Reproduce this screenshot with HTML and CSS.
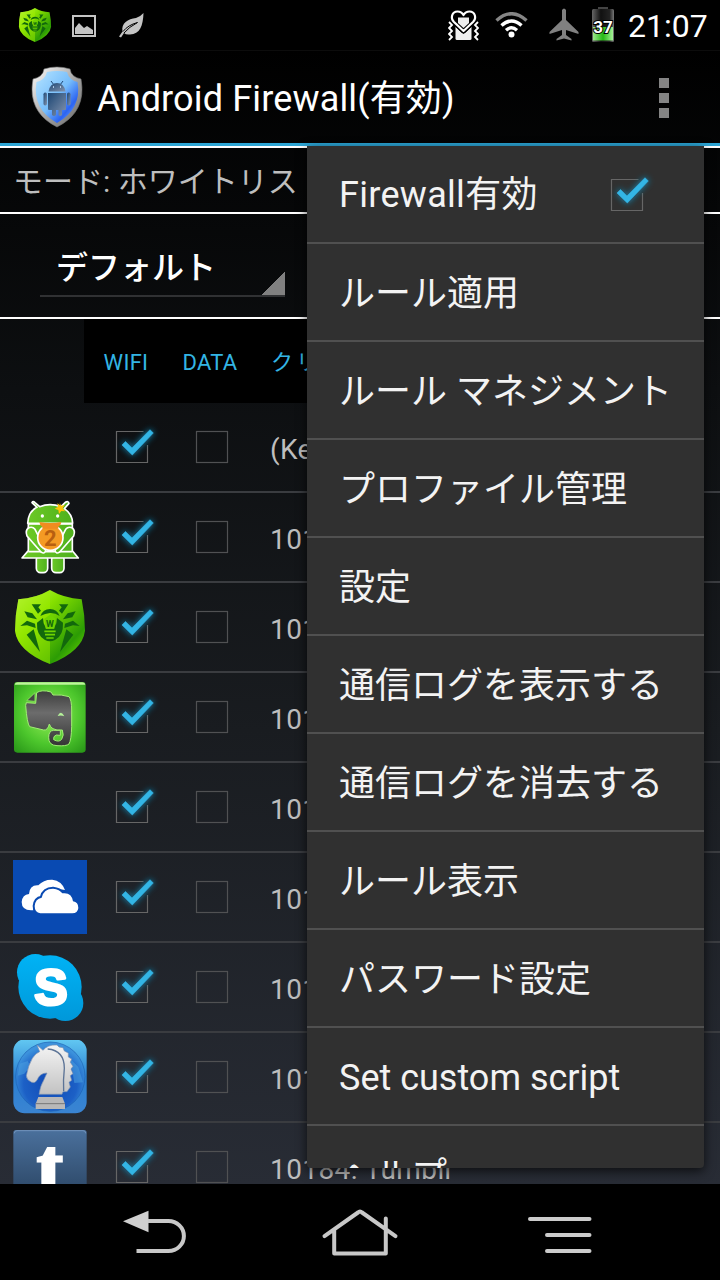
FILE: index.html
```
<!DOCTYPE html>
<html lang="ja">
<head>
  <meta charset="UTF-8">
  <meta name="viewport" content="width=device-width, initial-scale=1.0">
  <title>Android Firewall</title>
  <link rel="stylesheet" href="styles.css">
</head>
<body>
  <svg class="defs" width="0" height="0">
    <defs>
      <linearGradient id="shieldGreen" x1="0" y1="0" x2="1" y2="1">
        <stop offset="0" stop-color="#c4f85c"/><stop offset=".35" stop-color="#86e000"/>
        <stop offset=".75" stop-color="#2c9c04"/><stop offset="1" stop-color="#7ce800"/>
      </linearGradient>
      <linearGradient id="silver" x1="0" y1="0" x2="1" y2="1">
        <stop offset="0" stop-color="#fff"/><stop offset=".5" stop-color="#aaa"/><stop offset="1" stop-color="#666"/>
      </linearGradient>
      <linearGradient id="blueShield" x1="0" y1="0" x2="1" y2="1">
        <stop offset="0" stop-color="#b5e4ff"/><stop offset=".5" stop-color="#76bdfb"/><stop offset=".75" stop-color="#2c64f2"/><stop offset="1" stop-color="#8cc8ff"/>
      </linearGradient>
      <linearGradient id="steel" x1="0" y1="0" x2="1" y2="1">
        <stop offset="0" stop-color="#1c4674"/><stop offset="1" stop-color="#8494ae"/>
      </linearGradient>
      <linearGradient id="battery" x1="0" y1="0" x2="1" y2="0">
        <stop offset="0" stop-color="#666"/><stop offset=".4" stop-color="#111"/><stop offset=".8" stop-color="#222"/><stop offset="1" stop-color="#777"/>
      </linearGradient>
      <linearGradient id="charge" x1="0" y1="0" x2="1" y2="0">
        <stop offset="0" stop-color="#9be68b"/><stop offset=".5" stop-color="#26b814"/><stop offset="1" stop-color="#a6f298"/>
      </linearGradient>
      <radialGradient id="everGreen" cx=".5" cy=".45" r=".72">
        <stop offset="0" stop-color="#9cf25c"/><stop offset=".6" stop-color="#4cc62c"/><stop offset="1" stop-color="#299718"/>
      </radialGradient>
      <linearGradient id="elephant" x1="0" y1="0" x2="0" y2="1">
        <stop offset="0" stop-color="#3c3c3c"/><stop offset=".4" stop-color="#6c6c6c"/><stop offset="1" stop-color="#343434"/>
      </linearGradient>
      <linearGradient id="doll" x1="0" y1="0" x2="1" y2="0">
        <stop offset="0" stop-color="#6cc926"/><stop offset="1" stop-color="#4eb01c"/>
      </linearGradient>
      <linearGradient id="skype" gradientUnits="userSpaceOnUse" x1="0" y1="12" x2="0" y2="212">
        <stop offset="0" stop-color="#00b3f5"/><stop offset="1" stop-color="#0098da"/>
      </linearGradient>
      <linearGradient id="sky" x1="0" y1="0" x2="0" y2="1">
        <stop offset="0" stop-color="#62c8f2"/><stop offset=".5" stop-color="#2b80d2"/><stop offset="1" stop-color="#3a84d2"/>
      </linearGradient>
      <radialGradient id="globe" cx=".5" cy=".6" r=".55">
        <stop offset="0" stop-color="#0f48b4"/><stop offset=".7" stop-color="#1c60c6"/><stop offset="1" stop-color="#3c92dc"/>
      </radialGradient>
      <linearGradient id="knight" x1="0" y1="0" x2="0" y2="1">
        <stop offset="0" stop-color="#f4f4f4"/><stop offset="1" stop-color="#c2c2c2"/>
      </linearGradient>
      <linearGradient id="tumblr" x1="0" y1="0" x2="0" y2="1">
        <stop offset="0" stop-color="#4a709c"/><stop offset="1" stop-color="#28415e"/>
      </linearGradient>
      <filter id="glow" x="-50%" y="-50%" width="200%" height="200%">
        <feGaussianBlur stdDeviation="3.2"/>
      </filter>

      <symbol id="box" viewBox="-8 -12 60 56">
        <rect x=".5" y=".5" width="31" height="31" fill="none" stroke="#505153" stroke-width="1.2"/>
      </symbol>
      <symbol id="box-on" viewBox="-8 -12 60 56">
        <path d="M27.500.5H.5v31h31V14" fill="none" stroke="#666" stroke-width="1.2"/>
        <path d="M5 14l4.500-4.500 6.500 7L34-2.300 38.300 2 16.300 25z" fill="#1590c0" opacity=".8" filter="url(#glow)"/>
        <path d="M6 14l3.500-3.500 6.500 6.500L34-1.300 37.300 2 16.300 24z" fill="#33b5e5" stroke="#33b5e5" stroke-width=".6"/>
      </symbol>

      <symbol id="spider-shield" viewBox="0 0 222 222">
        <path d="M111 0Q70 24 16 28Q6 76 6 122Q14 184 111 222Q208 184 216 122Q216 76 206 28Q152 24 111 0z" fill="url(#shieldGreen)"/>
        <path d="M111 0Q70 24 16 28Q6 76 6 122Q14 184 111 222z" fill="#a4f000" opacity=".45"/>
        <g id="legs" fill="#12680c">
          <path d="M56 43H84L76 52 84 62 75 71z"/>
          <path d="M34 64L58 70 72 88 44 82z"/>
          <path d="M22 108L42 92 66 101 68 114 42 106z"/>
          <path d="M41 134L62 118 81 186z"/>
        </g>
        <use href="#legs" transform="matrix(-1 0 0 1 222 0)"/>
        <path d="M82 78Q90 57 111 57T140 78Q126 68 111 69T82 78z" fill="#12680c"/>
        <path d="M72 98L90 84 92 100 100 116H122L130 100 132 84 150 98Q152 136 126 150Q111 158 96 150Q70 136 72 98z" fill="#12680c"/>
        <path d="M111 74L128 86 124 116H98L94 86z" fill="#6fd400"/>
        <path d="M94 124H128M96 134H126M100 144H122" stroke="#6fd400" stroke-width="5"/>
        <text x="111" y="112" class="glyph-w">W</text>
      </symbol>
    </defs>
  </svg>

  <div class="statusbar">
    <svg class="st-shield" width="34" height="34"><use href="#spider-shield"/></svg>
    <svg class="st-picture" width="24" height="22" viewBox="0 0 24 22">
      <rect x="1" y="1" width="22" height="20" fill="none" stroke="#c4c4c4" stroke-width="2"/>
      <path d="M3 19V13L7 8l5 5 3-2 6 4v4z" fill="#c4c4c4"/>
    </svg>
    <svg class="st-leaf" width="25" height="25" viewBox="0 0 25 25">
      <path d="M24.500 0C24 13 21 21 11 21.500Q7 22 5 20L2 24.500 0 23.500 3.500 18.500C2 10 9 6 17 5Q21 4 24.500 0z" fill="#c4c4c4"/>
      <path d="M4 18.500Q9 12 18.500 9.500Q10 14 5 20" fill="none" stroke="#000" stroke-width="1"/>
    </svg>
    <span class="spacer"></span>
    <svg class="st-heart" width="31" height="32" viewBox="0 0 31 32">
      <path d="M7.500 8H23.500V28.500Q23.500 30 22 30H9Q7.500 30 7.500 28.500z" fill="#f0f0f0"/>
      <g stroke-linejoin="round">
        <path id="heart" d="M15.500 21L6 12C2 8 4 1.500 9.500 1.500Q13.500 1.500 15.500 5Q17.500 1.500 21.500 1.500C27 1.500 29 8 25 12z" fill="#000" stroke="#000" stroke-width="5"/>
        <use href="#heart" class="heart-line"/>
        <path d="M15.500 21L6 12C2 8 4 1.500 9.500 1.500Q13.500 1.500 15.500 5Q17.500 1.500 21.500 1.500C27 1.500 29 8 25 12z" fill="#000" stroke="#fff" stroke-width="2.200"/>
      </g>
      <path d="M10 7.500H21V13L15.500 18 10 13z" fill="#eee"/>
      <path d="M1 12l3 3-3 3 3 3-3 3 3 3-3 3M30 12l-3 3 3 3-3 3 3 3-3 3 3 3" fill="none" stroke="#fff" stroke-width="1.800"/>
    </svg>
    <svg class="st-wifi" width="33" height="27" viewBox="0 0 33 27" fill="none" stroke-width="3.400">
      <path d="M1.500 8.500Q16.500-5 31.500 8.500" stroke="#858585"/>
      <path d="M6.500 13.500Q16.500 4.500 26.500 13.500M11 18.200Q16.500 13.500 22 18.200" stroke="#fff"/>
      <circle cx="16.500" cy="22.500" r="3" fill="#fff"/>
    </svg>
    <svg class="st-plane" width="30" height="33" viewBox="0 0 30 33">
      <path d="M13 2Q15-1 17 2V12L29.500 24V26L17 22V27L22.500 31V32.500L15 30.500 7.500 32.500V31L13 27V22L.5 26V24L13 12z" fill="#808080"/>
    </svg>
    <svg class="st-battery" width="24" height="36" viewBox="0 0 24 36">
      <rect x="7" y="0" width="10" height="4" fill="#444"/>
      <rect x="1" y="2" width="22" height="33" rx="1.500" fill="url(#battery)"/>
      <path d="M2 20H22V33.500H2z" fill="url(#charge)"/>
      <text x="12" y="25.500" class="glyph-level">37</text>
    </svg>
    <span class="clock">21:07</span>
  </div>

  <div class="app">
    <div class="actionbar">
      <svg width="52" height="62" viewBox="0 0 52 62">
        <path d="M13 3Q26-1 39 3Q40 11 50 13Q56 46 26 61Q-4 46 2 13Q12 11 13 3z" fill="url(#silver)" stroke="#777" stroke-width=".6"/>
        <path d="M16 6Q26 4 36 6Q38 14 46.500 16Q51 43 26 57Q1 43 5.500 16Q14 14 16 6z" fill="url(#blueShield)"/>
        <path d="M20 15l3 4M32 15l-3 4" stroke="#1c4674" stroke-width="1"/>
        <g fill="url(#steel)">
          <path d="M17.500 25.500Q19 17 26 17T34.500 25.500z"/>
          <path d="M17 27H35V43Q35 44 34 44H31V49Q29 51 27.500 49V44H25V49Q23 51 21 49V44H18Q17 44 17 43z"/>
          <rect x="12.500" y="26.500" width="3.500" height="13" rx="1.700"/>
          <rect x="36" y="26.500" width="3.500" height="13" rx="1.700"/>
        </g>
        <path d="M22 21h1M29 21h1" stroke="#cfe9ff" stroke-width="1.400"/>
      </svg>
      <h1>Android Firewall(有効)</h1>
      <div class="overflow"><i></i><i></i><i></i></div>
    </div>

    <div class="mode">モード: ホワイトリスト</div>
    <div class="profile">
      <div class="spinner">デフォルト</div>
    </div>
    <div class="thead">
      <span>WIFI</span><span>DATA</span><span class="th-name">クリア</span>
    </div>

    <div class="list">
      <div class="row">
        <span></span>
        <svg class="cb"><use href="#box-on"/></svg>
        <svg class="cb"><use href="#box"/></svg>
        <span class="name">(Kernel)</span>
      </div>
      <div class="row">
        <svg class="icon" viewBox="0 0 222 222">
          <g fill="url(#doll)" stroke="#fff" stroke-width="5" stroke-linejoin="round">
            <rect x="70" y="165" width="34" height="53" rx="13"/>
            <rect x="116" y="165" width="37" height="53" rx="13"/>
            <path d="M46 72H178V152L196 174H27L46 152z"/>
            <path d="M46 155H178"/>
            <path d="M44 70Q46 34 72 22L57 8Q60 2 66 8L80 20Q111 8 144 20L157 7Q166 2 168 10L154 26Q178 42 179 70z"/>
            <path d="M46 84Q58 78 66 88L98 150Q96 164 84 156L42 108Q36 92 46 84zM178 84Q166 78 158 88L126 150Q128 164 140 156L182 108Q188 92 178 84z"/>
          </g>
          <circle cx="112" cy="113" r="38" fill="#f49a24" stroke="#fff" stroke-width="5"/>
          <path d="M79 66Q112 72 145 66Q144 76 136 80V86H88V80Q80 76 79 66z" fill="#f08c20"/>
          <text x="112" y="137" class="glyph-two">2</text>
          <circle cx="88" cy="48" r="5" fill="#fff"/><circle cx="134" cy="48" r="5" fill="#fff"/>
          <path d="M140 7l4 10 11-2-6 10 8 9-12-1-7 9-2-12-11-4 10-6-2-10 8 5z" fill="#ffc30a"/>
        </svg>
        <svg class="cb"><use href="#box-on"/></svg>
        <svg class="cb"><use href="#box"/></svg>
        <span class="name">10176: 2chMate</span>
      </div>
      <div class="row">
        <svg class="icon"><use href="#spider-shield"/></svg>
        <svg class="cb"><use href="#box-on"/></svg>
        <svg class="cb"><use href="#box"/></svg>
        <span class="name">10177: Dr.Web</span>
      </div>
      <div class="row">
        <svg class="icon" viewBox="0 0 222 222">
          <rect x="3" y="6" width="215" height="212" rx="10" fill="url(#everGreen)"/>
          <path d="M5 14Q6 7 14 7H208Q216 7 217 14z" fill="#bdf59a"/>
          <path d="M40 68L68 70 71 38Q86 28 114 36L120 45Q146 43 168 50Q176 60 176 90V140Q175 180 168 192Q160 199 132 197Q106 196 107 172Q107 152 122 151H142V166L130 165Q120 168 122 179Q138 188 146 178Q154 166 148 150Q130 152 120 146Q112 142 109 132Q104 152 92 150L50 140Q42 130 38 76z" fill="url(#elephant)" stroke="#a0ee74" stroke-width="3"/>
          <path d="M41 62L66 38V64z" fill="#444" stroke="#82dc5a" stroke-width="3"/>
          <path d="M134 108Q144 88 154 109Q144 105 134 108z" fill="#b5f39a"/>
        </svg>
        <svg class="cb"><use href="#box-on"/></svg>
        <svg class="cb"><use href="#box"/></svg>
        <span class="name">10178: Evernote</span>
      </div>
      <div class="row">
        <span></span>
        <svg class="cb"><use href="#box-on"/></svg>
        <svg class="cb"><use href="#box"/></svg>
        <span class="name">10179: Google</span>
      </div>
      <div class="row">
        <svg class="icon" viewBox="0 0 222 222">
          <path d="M0 0H222V222H0z" fill="#094ab2"/>
          <path d="M62 151H54Q26 150 26 126Q28 104 48 102Q50 74 76 76Q92 58 118 59Q146 62 156 90Q104 76 60 140z" fill="#fff"/>
          <path d="M82 160Q65 158 65 138Q67 116 86 113Q92 86 120 86Q140 88 148 100Q176 96 180 124Q196 126 196 144Q194 160 178 160z" fill="#fff" stroke="#094ab2" stroke-width="12" paint-order="stroke"/>
        </svg>
        <svg class="cb"><use href="#box-on"/></svg>
        <svg class="cb"><use href="#box"/></svg>
        <span class="name">10181: SkyDrive</span>
      </div>
      <div class="row">
        <svg class="icon" viewBox="0 0 222 222">
          <g fill="url(#skype)">
            <circle cx="111" cy="111" r="95"/><circle cx="67" cy="67" r="55"/><circle cx="157" cy="159" r="54"/>
          </g>
          <text x="114" y="166" class="glyph-s">S</text>
        </svg>
        <svg class="cb"><use href="#box-on"/></svg>
        <svg class="cb"><use href="#box"/></svg>
        <span class="name">10182: Skype</span>
      </div>
      <div class="row">
        <svg class="icon" viewBox="0 3 222 222">
          <rect x="1" y="1" width="220" height="222" rx="34" fill="url(#sky)"/>
          <circle cx="112" cy="113" r="104" fill="url(#globe)" stroke="#1d62b4" stroke-width="2"/>
          <path d="M20 74L44 66 52 82 34 104 14 110zM172 60L196 84 210 130 184 132z" fill="#4aa0e0" opacity=".55"/>
          <path d="M72 18L90 34Q104 16 132 18L138 24 150 26 154 36 166 42 166 54 176 60 172 70 180 82 174 90 180 104 172 110 176 124 168 130 172 144 162 158 150 158 147 166H78Q82 140 92 124Q98 110 102 102Q80 102 72 124Q66 134 56 130Q40 122 40 110Q46 78 58 58Q68 42 80 38z" fill="url(#knight)" stroke="#7890b0" stroke-width="2"/>
          <path d="M104 30Q154 34 154 88Q150 126 152 156" fill="none" stroke="#5d7496" stroke-width="4"/>
          <path d="M76 174H148L156 194V210H68V194z" fill="#b8b8b8"/>
          <path d="M68 194H156" stroke="#777" stroke-width="3"/>
        </svg>
        <svg class="cb"><use href="#box-on"/></svg>
        <svg class="cb"><use href="#box"/></svg>
        <span class="name">10183: Sleipnir</span>
      </div>
      <div class="row">
        <svg class="icon" viewBox="0 0 222 222">
          <rect x="1" width="220" height="222" rx="8" fill="url(#tumblr)"/>
          <path d="M4 10Q4 2 12 2H210Q218 2 218 10" fill="none" stroke="#7294bc" stroke-width="3"/>
          <text x="111" y="188" class="glyph-t">t</text>
        </svg>
        <svg class="cb"><use href="#box-on"/></svg>
        <svg class="cb"><use href="#box"/></svg>
        <span class="name">10184: Tumblr</span>
      </div>
    </div>
  </div>

  <div class="navbar">
    <svg width="80" height="60" viewBox="115 1205 80 60">
      <path d="M123 1222.300L148.500 1211.700V1233.300z" fill="#cfcfcf"/>
      <path d="M148 1222H168.500A15.400 15 0 0 1 168.500 1252H136.500" fill="none" stroke="#c8c8c8" stroke-width="4"/>
    </svg>
    <svg width="80" height="60" viewBox="320 1205 80 60" fill="none" stroke="#c8c8c8" stroke-width="4" stroke-linecap="round" stroke-linejoin="round">
      <path d="M324.500 1237.200L358 1213.500Q360 1211.500 362 1213.500L395.500 1237.200M334.200 1231V1254.500H385.800V1219.500"/>
    </svg>
    <svg width="80" height="60" viewBox="525 1205 80 60" stroke="#cbcbcb" stroke-width="4" stroke-linecap="round">
      <path d="M530 1220H589.500M547 1236H589.500M547 1252H589.500"/>
    </svg>
  </div>

  <div class="menu">
    <div class="item">Firewall有効 <svg class="cb"><use href="#box-on"/></svg></div>
    <div class="item">ルール適用</div>
    <div class="item">ルール マネジメント</div>
    <div class="item">プロファイル管理</div>
    <div class="item">設定</div>
    <div class="item">通信ログを表示する</div>
    <div class="item">通信ログを消去する</div>
    <div class="item">ルール表示</div>
    <div class="item">パスワード設定</div>
    <div class="item">Set custom script</div>
    <div class="item">ヘルプ</div>
  </div>
</body>
</html>
```
FILE: styles.css
```
* {
  box-sizing: border-box;
}
body {
  margin: 0;
  position: relative;
  width: 720px;
  height: 1280px;
  overflow: hidden;
  background: #000;
  color: #fff;
  font-family: Roboto, "Noto Sans CJK JP", sans-serif;
}
svg {
  flex: none;
  display: block;
}
.defs {
  position: absolute;
}

/* status bar */
.statusbar {
  display: flex;
  align-items: flex-start;
  height: 50px;
  padding: 8px 12px 0 18px;
}
.st-picture {
  margin: 7px 0 0 20px;
}
.st-leaf {
  margin: 5px 0 0 23px;
}
.spacer {
  flex: 1;
}
.st-heart {
  margin: 2px 16px 0 0;
}
.st-wifi {
  margin: 4px 21px 0 0;
}
.st-plane {
  margin: 0 12px 0 0;
}
.st-battery {
  margin: -1px 13px 0 0;
}
.clock {
  width: 80px;
  font-size: 32px;
  line-height: 36px;
  white-space: nowrap;
}

/* application */
.app {
  height: 1134px;
  overflow: hidden;
  background: linear-gradient(#000, #0d0f11 30%, #191c20 60%, #282c35);
}
.actionbar {
  display: flex;
  align-items: center;
  height: 96px;
  padding: 0 51px 0 31px;
  border-top: 1px solid #0c0c0c;
  border-bottom: 3px solid #2ca5d5;
}
.actionbar h1 {
  flex: 1;
  margin: 4px 0 0 14px;
  font-size: 36px;
  font-weight: 400;
  line-height: 44px;
  letter-spacing: 0.15px;
}
.overflow {
  display: flex;
  flex-direction: column;
  gap: 5px;
  margin-top: 2px;
}
.overflow i {
  width: 10px;
  height: 10px;
  background: #848484;
}
.mode {
  height: 68px;
  padding: 0 13px;
  border-top: 2px solid #fff;
  border-bottom: 2px solid #fff;
  color: #bebebe;
  font-size: 30px;
  line-height: 67px;
}
.profile {
  height: 105px;
  padding: 37px 40px 0;
  border-bottom: 2px solid #fff;
}
.spinner {
  width: 245px;
  height: 46px;
  padding-left: 16px;
  border-bottom: 2px solid #303133;
  background: linear-gradient(135deg, transparent 50%, #808080 50%) right bottom / 25px 25px no-repeat;
  background-origin: border-box;
  background-clip: border-box;
  font-size: 32px;
  font-weight: 500;
  line-height: 35px;
}
.thead {
  display: flex;
  height: 84px;
  width: 616px;
  margin-left: 84px;
  background: #000;
  color: #33b5e5;
  font-size: 22px;
  line-height: 88px;
}
.thead span {
  width: 84px;
  text-align: center;
  letter-spacing: 0.3px;
}
.thead .th-name {
  width: auto;
  margin-left: 19px;
  letter-spacing: 3px;
}
.row {
  display: grid;
  grid-template-columns: 95px 80px 80px 1fr;
  align-items: center;
  height: 90px;
  padding-left: 13px;
  border-bottom: 2px solid #3a3c40;
}
.icon {
  width: 74px;
  height: 74px;
}
.cb {
  width: 60px;
  height: 56px;
}
.name {
  margin-left: 2px;
  padding-top: 5px;
  color: #bebebe;
  font-size: 28px;
  line-height: 34px;
  letter-spacing: 0.4px;
  white-space: nowrap;
}

/* letters that sit inside the icons */
.glyph-w, .glyph-two, .glyph-s, .glyph-t, .glyph-level {
  text-anchor: middle;
  font-weight: 700;
}
.glyph-w {
  font-size: 27px;
  fill: #12680c;
}
.glyph-two {
  font-size: 66px;
  fill: #b85f10;
}
.glyph-s {
  font-family: "Liberation Sans", sans-serif;
  font-size: 150px;
  fill: #fff;
  stroke: #fff;
  stroke-width: 9px;
  stroke-linejoin: round;
}
.glyph-t {
  font-family: "Liberation Serif", serif;
  font-size: 232px;
  fill: #fff;
  stroke: #fff;
  stroke-width: 9px;
}
.glyph-level {
  font-size: 17px;
  fill: #fff;
  stroke: #000;
  stroke-width: 2px;
  paint-order: stroke;
}

/* system navigation */
.navbar {
  display: flex;
  gap: 125px;
  height: 96px;
  padding: 20px 0 0 115px;
  background: #000;
}

/* options menu */
.menu {
  position: absolute;
  top: 146px;
  left: 307px;
  width: 397px;
  height: 1022px;
  overflow: hidden;
  border-radius: 0 0 4px 4px;
  background: #303030;
  box-shadow: 0 3px 11px rgba(0, 0, 0, 0.7);
}
.item {
  display: flex;
  align-items: center;
  justify-content: space-between;
  height: 98px;
  padding: 3px 41px 0 32px;
  border-bottom: 2px solid #505050;
  color: #f3f3f3;
  font-size: 36px;
  line-height: 44px;
  white-space: nowrap;
}
.item:first-child {
  padding-top: 1px;
  letter-spacing: 0.3px;
}
```
